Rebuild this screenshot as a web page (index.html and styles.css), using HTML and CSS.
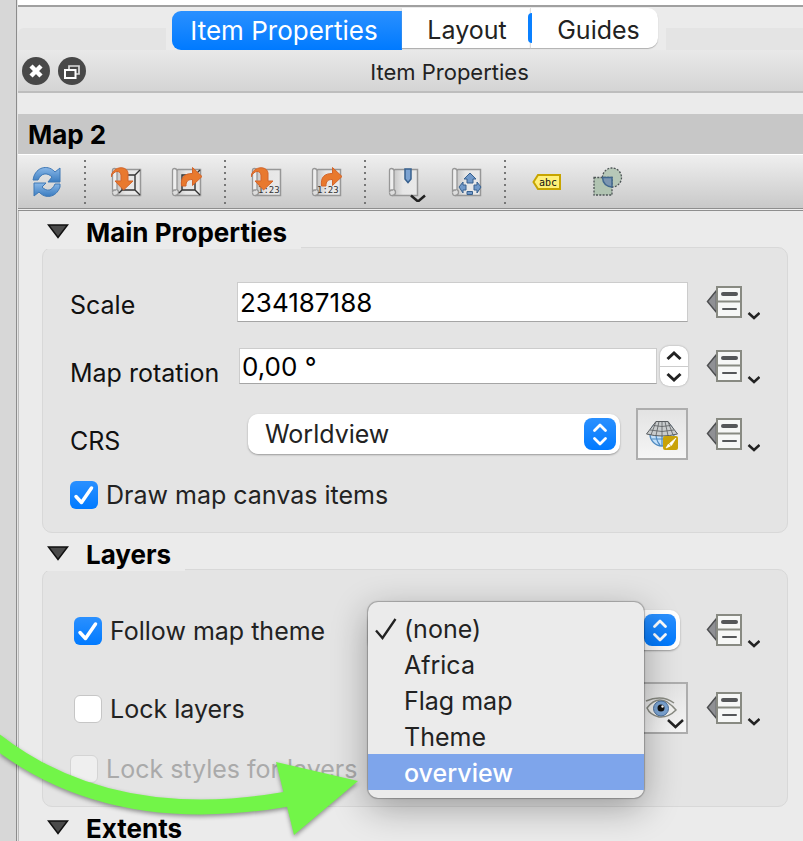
FILE: index.html
```html
<!DOCTYPE html>
<html lang="en">
<head>
<meta charset="utf-8">
<title>Item Properties</title>
<link rel="stylesheet" href="styles.css">
</head>
<body>
<svg class="defs" aria-hidden="true">
  <defs>
    <linearGradient id="paper" x1="0" x2="1"><stop offset="0" stop-color="#c4c4c4"/><stop offset=".4" stop-color="#e6e6e6"/><stop offset="1" stop-color="#e9e9e9"/></linearGradient>
    <linearGradient id="blue" x1="0" y1="0" x2="0" y2="1"><stop offset="0" stop-color="#8ab8e8"/><stop offset="1" stop-color="#3a7cc0"/></linearGradient>
    <symbol id="override" viewBox="0 0 54 40">
      <path d="M10.500 8.500 1.500 19.500l9 11z" fill="#8f9094" stroke="#4d4e50" stroke-width="1.500"/>
      <rect x="11" y="5" width="24" height="30" fill="#f6f7f6" stroke="#888a82" stroke-width="2"/>
      <path d="M11 19.500h24" stroke="#888a82" stroke-width="2"/>
      <path d="M17 12h13" stroke="#555759" stroke-width="4" stroke-linecap="round"/>
      <path d="M17 27h13" stroke="#555759" stroke-width="2" stroke-linecap="round"/>
      <path d="M42.500 31l5.500 5 5.500-5" fill="none" stroke="#222" stroke-width="2.500"/>
    </symbol>
    <symbol id="scroll" viewBox="0 0 32 32">
      <path d="M7 3.500h22.500v26H5V5z" fill="url(#paper)" stroke="#979797" stroke-width="1.500"/>
      <path d="M1.500 4.500q0-2 2-2t2.500 2V24H3.500q-2 0-2 2.500z" fill="#eee" stroke="#979797" stroke-width="1.300"/>
      <path d="M6 24q1.500 0 1.500 2.500t-3 3-3-3" fill="#ddd" stroke="#979797" stroke-width="1.300"/>
    </symbol>
    <symbol id="frame" viewBox="0 0 32 32">
      <path d="M11 9h13v15H11zM24 9l5-5M24 24l5 5M11 24l-3 3" fill="none" stroke="#333" stroke-width="1.400"/>
    </symbol>
    <symbol id="arrow-in" viewBox="0 0 32 32">
      <path d="M1 11C2 0 17-1 18 7v8h5l-9.500 9L5 15h6V9C10 4 4 4 1 11z" fill="#e8792e" stroke="#d3642a" stroke-width="1"/>
    </symbol>
    <symbol id="arrow-out" viewBox="0 0 32 32">
      <path d="M10.500 20C9.500 11 13.500 7.500 21.500 7.500V1.500l9.500 9-9.500 9V13.500c-5 0-6.500 2-6.500 6.500z" fill="#e8792e" stroke="#d3642a" stroke-width="1"/>
    </symbol>
    <symbol id="updown" viewBox="0 0 32 32">
      <path d="M10.500 12.500 16 7l5.500 5.500M10.500 20.500 16 26l5.500-5.500" fill="none" stroke="#fff" stroke-width="2.800" stroke-linecap="round" stroke-linejoin="round"/>
    </symbol>
    <symbol id="triangle" viewBox="0 0 22 15">
      <path d="M1.500 1h19L11 13.500z" fill="#4a4a4a" stroke="#111" stroke-width="1.500"/>
    </symbol>
  </defs>
</svg>

<div class="window">
  <div class="gutter"></div>
  <main class="panel">
    <div class="canvas-edge"></div>
    <div class="tabbar">
      <div class="tab-shelf shelf-left"></div>
      <div class="tabs" role="tablist">
        <button class="tab tab-active" role="tab" aria-selected="true">Item Properties</button>
        <button class="tab tab-layout" role="tab" aria-selected="false">Layout</button>
        <button class="tab tab-guides" role="tab" aria-selected="false">Guides</button>
      </div>
      <div class="tab-shelf shelf-right"></div>
    </div>

    <header class="dock-title">
      <div class="dock-buttons">
        <button class="round" aria-label="Close"><svg viewBox="0 0 28 28"><circle cx="14" cy="14" r="14" fill="#484848"/><path d="M9 9l10 10M19 9 9 19" stroke="#fff" stroke-width="4.500"/></svg></button>
        <button class="round" aria-label="Float"><svg viewBox="0 0 28 28"><circle cx="14" cy="14" r="14" fill="#484848"/><path d="M11 12V9h10v8h-3" fill="none" stroke="#ddd" stroke-width="1.700"/><rect x="7" y="13" width="10.500" height="8" fill="#484848" stroke="#fff" stroke-width="2"/></svg></button>
      </div>
      <h1 class="dock-name">Item Properties</h1>
    </header>

    <h2 class="item-name">Map 2</h2>

    <div class="toolbar" role="toolbar">
      <button class="tool tool-first" aria-label="Update preview"><svg class="icon" viewBox="0 0 32 32"><path d="M3 10C7 0 18-1 24 6l5-4v14H17l4-5C16 6 10 7 7 14H2z" fill="url(#blue)" stroke="#3f78b5"/><path d="M29 21C25 32 14 33 8 26l-5 4V17h12l-4 4c5 5 10 4 13-3h5z" fill="url(#blue)" stroke="#3f78b5"/></svg></button>
      <span class="divider"></span>
      <button class="tool" aria-label="Set map extent to match main canvas"><svg class="icon" viewBox="0 0 32 32"><use href="#scroll"/><use href="#frame"/><use href="#arrow-in" x="-1"  width="32" height="32"/></svg></button>
      <button class="tool" aria-label="View current map extent in main canvas"><svg class="icon" viewBox="0 0 32 32"><use href="#scroll"/><use href="#frame"/><use href="#arrow-out"/></svg></button>
      <span class="divider"></span>
      <button class="tool" aria-label="Set map scale to match main canvas"><svg class="icon" viewBox="0 0 32 32"><use href="#scroll"/><text class="tiny" x="7" y="27">1:23</text><use href="#arrow-in" x="-1" width="32" height="32"/></svg></button>
      <button class="tool" aria-label="Set main canvas to match map scale"><svg class="icon" viewBox="0 0 32 32"><use href="#scroll"/><text class="tiny" x="6" y="27">1:23</text><use href="#arrow-out"/></svg></button>
      <span class="divider"></span>
      <button class="tool" aria-label="Bookmarks"><svg class="icon icon-wide" viewBox="0 0 40 40"><use href="#scroll" x="1" y="4" width="32" height="32"/><path d="M18 7h6v10l-3 3.500-3-3.500z" fill="#7ca3d2" stroke="#38618f" stroke-width="1.500"/><path d="M24 33.500l7 6 7-6" fill="none" stroke="#222" stroke-width="2.500"/></svg></button>
      <button class="tool" aria-label="Interactively edit map extent"><svg class="icon" viewBox="0 0 32 32"><use href="#scroll"/><path d="M19 7l6 6h-3v4h-6v-4h-3zM8 21l4-5v3h3v5h-3v3zM30 21l-4-5v3h-3v5h3v3zM16 25.500h5.500v3H16z" fill="#7199c9" stroke="#38618f"/></svg></button>
      <span class="divider"></span>
      <button class="tool" aria-label="Labeling settings"><svg class="icon" viewBox="0 0 32 32"><path d="M2.500 16 7 9h22v14H7z" fill="#fff07a" stroke="#c7a400" stroke-width="2"/><text class="abc" x="8" y="20">abc</text></svg></button>
      <button class="tool" aria-label="Clipping settings"><svg class="icon" viewBox="0 0 32 32"><circle cx="21" cy="11.500" r="9.500" fill="#b7c8b8" stroke="#4c5355" stroke-width="1.300" stroke-dasharray="2 1.300"/><path d="M3 11.500h18v17.500H3z" fill="#b1c4b2" stroke="#4c5355" stroke-width="1.300" stroke-dasharray="2 1.300"/><path d="M11.500 11.500H21V21q-9-1-9.500-9.500z" fill="#7c96b1" stroke="#41688f" stroke-width="1.500"/></svg></button>
    </div>

    <div class="sections">
      <section class="section">
        <h3 class="section-head"><button class="section-toggle" aria-expanded="true"><svg class="triangle"><use href="#triangle"/></svg>Main Properties</button></h3>
        <div class="box">
          <div class="row">
            <label class="name" for="scale">Scale</label>
            <div class="field"><input class="text scale" id="scale" type="text" value="234187188"></div>
            <button class="override" aria-label="Data defined override for scale"><svg><use href="#override"/></svg></button>
          </div>
          <div class="row">
            <label class="name" for="rotation">Map rotation</label>
            <div class="field field-spin">
              <input class="text spin-text" id="rotation" type="text" value="0,00 °">
              <div class="stepper">
                <button class="step" aria-label="Increase"><svg viewBox="0 0 28 20"><path d="M7.500 13 14 7l6.500 6" fill="none" stroke="#222" stroke-width="3"/></svg></button>
                <button class="step" aria-label="Decrease"><svg viewBox="0 0 28 20"><path d="M7.500 7 14 13l6.500-6" fill="none" stroke="#222" stroke-width="3"/></svg></button>
              </div>
            </div>
            <button class="override" aria-label="Data defined override for rotation"><svg><use href="#override"/></svg></button>
          </div>
          <div class="row row-tall">
            <label class="name" for="crs">CRS</label>
            <div class="field field-crs">
              <div class="popup-button">
                <select id="crs"><option>Worldview</option></select>
                <svg class="badge"><use href="#updown"/></svg>
              </div>
              <button class="square" aria-label="Select CRS">
                <svg class="icon" viewBox="0 0 32 32"><circle cx="16" cy="16" r="12" fill="#c3e0fa" stroke="#4f8ac0" stroke-width="1.300"/><path d="M16 14v14M10 15q0 8 4 12M22 15q0 8-4 12M6 21h20" fill="none" stroke="#4f8ac0" stroke-width="1.200"/><path d="M10 3.500h12L31.500 16Q16 20 .5 16z" fill="#c9cccd" stroke="#5a5d60"/><path d="M7.500 7.500q8.500 2 17 0M4 12q12 3 24 0M13 3.500 10 17.500M19 3.500l3 14M16 3.500V18M10 3.500 5 17M22 3.500 27 17" fill="none" stroke="#5a5d60" stroke-width=".8"/><rect x="17" y="18" width="15" height="14" rx="2" fill="#c9a208"/><path d="M30 20l-6.500 5.500 2 2zM22.500 26l2 2-4.500 2z" fill="#fff" stroke="#fff" stroke-width=".7"/></svg>
              </button>
            </div>
            <button class="override" aria-label="Data defined override for CRS"><svg><use href="#override"/></svg></button>
          </div>
          <div class="row row-check">
            <label class="check"><input type="checkbox" checked>Draw map canvas items</label>
          </div>
        </div>
      </section>

      <section class="section">
        <h3 class="section-head"><button class="section-toggle" aria-expanded="true"><svg class="triangle"><use href="#triangle"/></svg>Layers</button></h3>
        <div class="box box-layers">
          <div class="row row-layer">
            <label class="check check-inset"><input type="checkbox" checked>Follow map theme</label>
            <div class="popup-button theme">
              <select aria-label="Map theme"><option>(none)</option></select>
              <svg class="badge"><use href="#updown"/></svg>
              <ul class="menu" role="listbox" aria-label="Map themes">
                <li class="menu-item" role="option" aria-selected="true"><svg class="tick" viewBox="0 0 24 24"><path d="M2 13.500 8.500 21 21.500 2" fill="none" stroke="#222" stroke-width="2.300"/></svg>(none)</li>
                <li class="menu-item" role="option">Africa</li>
                <li class="menu-item" role="option">Flag map</li>
                <li class="menu-item" role="option">Theme</li>
                <li class="menu-item menu-hover" role="option">overview</li>
              </ul>
            </div>
            <button class="override" aria-label="Data defined override for theme"><svg><use href="#override"/></svg></button>
          </div>
          <div class="row row-layer">
            <label class="check check-inset"><input type="checkbox">Lock layers</label>
            <button class="square" aria-label="Set layers from theme">
              <svg class="eye" viewBox="0 0 48 48"><path d="M9 24Q18 12 29 18q6 4 9 8Q30 34 21 33 12 31 9 24z" fill="#f2f2f0" stroke="#888a82" stroke-width="1.500"/><path d="M8 17Q24 10 36 19" fill="none" stroke="#888a82" stroke-width="1.500"/><circle cx="23" cy="24.500" r="7.500" fill="#7ba4d3" stroke="#4a6e9c"/><circle cx="23" cy="24" r="3.500" fill="#111"/><circle cx="24.500" cy="22.500" r="1.200" fill="#fff"/><path d="M30 36l7.500 7 7.500-7" fill="none" stroke="#222" stroke-width="2.500"/></svg>
            </button>
            <button class="override" aria-label="Data defined override for layers"><svg><use href="#override"/></svg></button>
          </div>
          <div class="row row-styles">
            <label class="check check-disabled"><input type="checkbox" disabled>Lock styles for layers</label>
          </div>
        </div>
      </section>

      <section class="section">
        <h3 class="section-head"><button class="section-toggle" aria-expanded="true"><svg class="triangle"><use href="#triangle"/></svg>Extents</button></h3>
        <div class="box"></div>
      </section>
    </div>
  </main>
  <svg class="pointer" viewBox="0 0 370 120" aria-hidden="true">
    <path d="M-5 19Q110 109 288 78" fill="none" stroke="#72f548" stroke-width="15"/>
    <path d="M276 41 358 60 294 114z" fill="#72f548"/>
  </svg>
</div>
</body>
</html>
```
FILE: styles.css
```css
* { box-sizing: border-box; }

body {
  margin: 0;
  background: #ebebeb;
  color: #222;
  font-family: Inter, "Liberation Sans", sans-serif;
  font-size: 25px;
  line-height: 32px;
}

button, input, select { font: inherit; color: inherit; }
button { border: 0; padding: 0; background: none; }
svg { display: block; }
h1, h2, h3, ul { margin: 0; padding: 0; }

.defs { position: absolute; width: 0; height: 0; }

.window {
  position: relative;
  display: flex;
  height: 100vh;
  overflow: hidden;
}

.gutter {
  flex: 0 0 17px;
  background: #d7d7d7;
  border-right: 1px solid #8c8c8c;
}

.panel {
  flex: 1;
  min-width: 0;
  display: flex;
  flex-direction: column;
  border-left: 1px solid #e4e4e4;
}

.canvas-edge {
  flex: none;
  height: 7px;
  background: #fff;
  border-bottom: 2px solid #a0a0a0;
}

/* Tabs */
.tabbar { flex: none; display: flex; height: 43px; }
.tab-shelf { margin-top: 21px; background: #e4e4e4; }
.shelf-left { flex: 148; margin-right: 6px; border-top-left-radius: 6px; }
.shelf-right { flex: 137; margin-left: 8px; }
.tabs {
  display: flex;
  align-items: flex-start;
  padding-top: 1px;
}
.tab {
  height: 40px;
  background: #fff;
  box-shadow: 0 1px 1px #b0b0b0;
}
.tab-active {
  width: 230px;
  height: 39px;
  margin-top: 3px;
  padding-right: 6px;
  color: #fff;
  font-size: 26px;
  background: linear-gradient(#2a90ff, #007aff);
  border-radius: 9px 0 0 9px;
  box-shadow: none;
}
.tab-layout { width: 128px; padding: 3px 0 0 2px; }
.tab-guides {
  position: relative;
  width: 128px;
  padding: 3px 0 0 8px;
  border-left: 1px solid #ddd;
  border-radius: 0 10px 10px 0;
}
.tab-guides::before {
  content: "";
  position: absolute;
  left: -3px;
  top: 5px;
  width: 4px;
  height: 30px;
  background: #0a80ff;
  border-radius: 4px 0 0 4px;
}

/* Dock title */
.dock-title {
  flex: none;
  display: flex;
  align-items: center;
  height: 43px;
  padding-left: 4px;
  background: linear-gradient(#e9e9e9, #d4d4d4);
  border-bottom: 2px solid #bdbdbd;
}
.dock-buttons { display: flex; gap: 8px; width: 74px; }
.round { width: 28px; height: 28px; }
.round svg { width: 28px; height: 28px; }
.dock-name {
  flex: 1;
  padding-top: 3px;
  text-align: center;
  font-size: 22px;
  font-weight: 400;
}

.item-name {
  flex: none;
  margin-top: 21px;
  padding: 5px 10px 3px;
  background: #c7c7c7;
  color: #000;
  font-size: 26px;
  font-weight: 700;
}

/* Toolbar */
.toolbar {
  flex: none;
  display: flex;
  align-items: center;
  height: 57px;
  padding-left: 1px;
  background: linear-gradient(#efefef, #c9c9c9);
  border-top: 1px solid #fff;
  border-bottom: 3px double #8e8e8e;
}
.tool {
  display: flex;
  justify-content: center;
  width: 60px;
  padding-left: 4px;
}
.tool-first { width: 56px; padding-left: 0; }
.icon { width: 32px; height: 32px; }
.icon-wide { width: 40px; height: 40px; }
.tiny { font-family: "DejaVu Sans Mono", monospace; font-size: 9px; fill: #333; }
.abc { font-family: "DejaVu Sans Mono", monospace; font-size: 10px; fill: #111; }
.divider {
  width: 2px;
  height: 44px;
  margin: 0 9px;
  background: repeating-linear-gradient(#777 0 2px, transparent 2px 6px);
}

/* Sections */
.sections {
  flex: 1;
  min-height: 0;
  overflow: hidden;
  padding: 0 15px 0 23px;
  border-left: 1px solid #bbb;
}
.section { padding-top: 2px; }
.section-head {
  position: relative;
  width: fit-content;
  margin-bottom: -2px;
  padding-right: 14px;
  background: #ebebeb;
  font-size: 26px;
}
.section-toggle {
  display: flex;
  align-items: center;
  gap: 17px;
  height: 36px;
  padding: 4px 0 0 5px;
  color: #000;
  font-weight: 700;
}
.triangle { width: 22px; height: 15px; margin-bottom: 4px; }

.box {
  padding: 22px 27px 14px;
  background: #e4e4e4;
  border: 1px solid #d8d8d8;
  border-radius: 10px;
}
.box-layers { padding-top: 21px; padding-bottom: 17px; }

.row {
  display: flex;
  align-items: center;
  height: 64px;
}
.row-tall { height: 72px; }
.row-check { height: 48px; }
.row-layer { height: 78px; justify-content: space-between; }
.row-styles { height: 42px; }

.name { width: 167px; padding-top: 6px; color: #111; }
.row + .row .name { padding-top: 14px; }
.field { flex: 1; min-width: 0; display: flex; align-items: center; }
.field-spin { padding-left: 2px; gap: 3px; }
.field-crs { padding-left: 11px; gap: 16px; }

.override { margin-left: 18px; }
.override svg { width: 54px; height: 40px; }

.text {
  flex: 1;
  min-width: 0;
  height: 40px;
  padding: 0 2px;
  border: 1px solid #ccc;
  border-bottom-color: #a5a5a5;
  background: #fff;
  color: #000;
  font-size: 26px;
}
.spin-text { height: 36px; }

.stepper {
  width: 28px;
  border-radius: 9px;
  background: #fff;
  box-shadow: 0 0 2px #999;
}
.step { display: block; height: 20px; }
.step + .step { border-top: 1px solid #ccc; }
.step svg { width: 28px; height: 20px; }

.popup-button { position: relative; flex: 1; }
.popup-button select {
  display: block;
  appearance: none;
  width: 100%;
  height: 40px;
  padding: 0 40px 0 17px;
  border: 0;
  border-radius: 10px;
  background: #fff;
  box-shadow: 0 1px 2px #999;
}
.badge {
  position: absolute;
  right: 4px;
  top: 4px;
  width: 32px;
  height: 32px;
  border-radius: 8px;
  background: linear-gradient(#2a90ff, #007aff);
  pointer-events: none;
}

.square {
  display: flex;
  align-items: center;
  justify-content: center;
  width: 52px;
  height: 52px;
  border: 2px solid #adadad;
  background: linear-gradient(#e3e3e3, #f5f5f5);
}
.eye { width: 48px; height: 48px; }
.row-layer .square { margin-left: auto; }

.check { display: flex; align-items: center; gap: 8px; padding-top: 1px; white-space: nowrap; }
.check-inset { padding-left: 4px; }
.check-disabled { color: #aaa; }
.check input {
  appearance: none;
  width: 28px;
  height: 28px;
  margin: 0;
  border: 1px solid #c6c6c6;
  border-radius: 6px;
  background: #fff;
}
.check input:checked {
  border: 0;
  background: url("data:image/svg+xml,%3Csvg xmlns='http://www.w3.org/2000/svg' viewBox='0 0 28 28'%3E%3Cpath d='M6 15.500l5.500 6L21.500 7' fill='none' stroke='white' stroke-width='3.500' stroke-linecap='round' stroke-linejoin='round'/%3E%3C/svg%3E"), linear-gradient(#2a90ff, #007aff);
}
.check input:disabled { background: #efefef; border-color: #d4d4d4; }

/* Theme menu */
.theme { flex: 0 0 312px; margin-left: auto; margin-right: 8px; }
.menu {
  position: absolute;
  z-index: 2;
  left: 0;
  right: 36px;
  top: -8px;
  padding: 8px 0;
  list-style: none;
  background: #ebebeb;
  border-radius: 10px;
  box-shadow: 0 0 1px 1px rgba(0, 0, 0, .25), 0 10px 36px rgba(0, 0, 0, .32);
}
.menu-item { position: relative; padding: 3px 0 1px 36px; }
.menu-hover { color: #fff; background: #7ea5eb; font-weight: 500; }
.tick { position: absolute; left: 6px; top: 7px; width: 24px; height: 24px; }

.pointer {
  position: absolute;
  z-index: 3;
  left: 0;
  bottom: 0;
  width: 370px;
  height: 120px;
  filter: drop-shadow(0 2px 2px rgba(0, 0, 0, .4));
  pointer-events: none;
}
```
